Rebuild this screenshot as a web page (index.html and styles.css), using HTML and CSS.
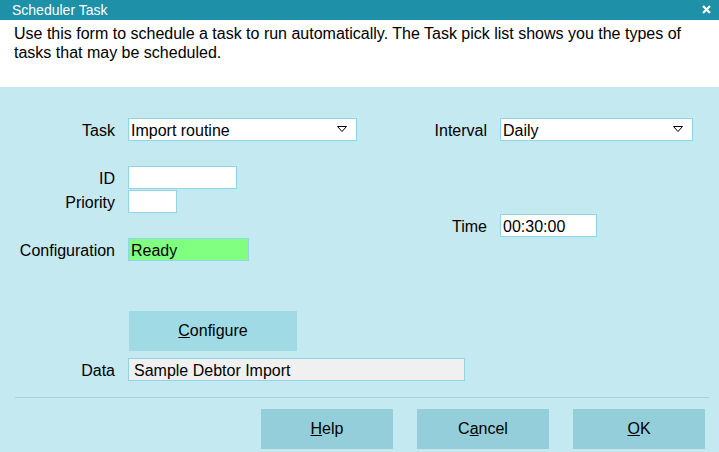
FILE: index.html
```html
<!DOCTYPE html>
<html>
<head>
<meta charset="utf-8">
<link rel="stylesheet" href="styles.css">
</head>
<body>
<div class="dialog">
  <div class="titlebar">
    <span class="title">Scheduler Task</span>
    <svg class="close" width="9" height="9" viewBox="0 0 9 9"><path d="M1 1 L8 8 M8 1 L1 8" stroke="#fff" stroke-width="2.2" fill="none"/></svg>
  </div>
  <div class="desc">Use this form to schedule a task to run automatically. The Task pick list shows you the types of tasks that may be scheduled.</div>
  <div class="body">
    <div class="grid">
      <div class="label r1">Task</div>
      <div class="field select task r1"><span>Import routine</span><svg width="10" height="6" viewBox="0 0 10 6"><path d="M0.5 0.5 H9.5 L5 5.5 Z" fill="none" stroke="#000" stroke-width="1"/></svg></div>
      <div class="label2 r1">Interval</div>
      <div class="field select interval r1"><span>Daily</span><svg width="10" height="6" viewBox="0 0 10 6"><path d="M0.5 0.5 H9.5 L5 5.5 Z" fill="none" stroke="#000" stroke-width="1"/></svg></div>

      <div class="label r3">ID</div>
      <div class="field id r3"></div>

      <div class="label r4">Priority</div>
      <div class="field prio r4"></div>

      <div class="label2 r5">Time</div>
      <div class="field time r5">00:30:00</div>

      <div class="label r6">Configuration</div>
      <div class="field config r6">Ready</div>
    </div>
    <div class="configure-row">
      <div class="btn configure"><u>C</u>onfigure</div>
    </div>
    <div class="data-row">
      <div class="label">Data</div>
      <div class="field data">Sample Debtor Import</div>
    </div>
    <div class="sep"></div>
    <div class="buttons">
      <div class="btn action"><u>H</u>elp</div>
      <div class="btn action">C<u>a</u>ncel</div>
      <div class="btn action"><u>O</u>K</div>
    </div>
  </div>
</div>
</body>
</html>
```

FILE: styles.css
```css
html, body {
  margin: 0;
  padding: 0;
}
body {
  font-family: "Liberation Sans", Arial, sans-serif;
  font-size: 16px;
  color: #000;
  background: #c5e9f1;
}
.dialog {
  width: 719px;
  height: 452px;
  overflow: hidden;
  background: #c5e9f1;
}
.titlebar {
  height: 20px;
  background: #1e90a8;
  color: #fff;
  display: flex;
  align-items: center;
  justify-content: space-between;
  padding: 0 8px 0 12px;
}
.title {
  font-size: 14px;
  line-height: 20px;
}
.close {
  display: block;
  margin-top: -1px;
}
.desc {
  height: 67px;
  box-sizing: border-box;
  background: #fff;
  padding: 4px 30px 0 14px;
  line-height: 19px;
}
.body {
  padding-top: 31px;
}
.grid {
  display: grid;
  grid-template-columns: 128px 229px 143px 193px;
  grid-template-rows: repeat(6, 23px);
  row-gap: 1px;
}
.r1 { grid-row: 1; }
.r3 { grid-row: 3; }
.r4 { grid-row: 4; }
.r5 { grid-row: 5; }
.r6 { grid-row: 6; }
.label {
  grid-column: 1;
  text-align: right;
  padding-right: 13px;
  line-height: 25px;
}
.label2 {
  grid-column: 3;
  text-align: right;
  padding-right: 13px;
  line-height: 25px;
}
.field {
  box-sizing: border-box;
  height: 23px;
  border: 1px solid #8ed6e6;
  background: #fff;
  line-height: 23px;
  padding-left: 2px;
  white-space: nowrap;
}
.r1.field, .r3.field, .r4.field, .r6.field { grid-column: 2; }
.interval, .time { grid-column: 4 !important; }
.select {
  display: flex;
  align-items: center;
  justify-content: space-between;
  padding-right: 9px;
}
.select span { line-height: 21px; padding-top: 1px; }
.select svg { display: block; margin-top: -1px; }
.task { width: 229px; }
.interval { width: 193px; }
.id { width: 109px; }
.prio { width: 49px; }
.time { width: 97px; }
.config {
  width: 121px;
  background: #80ff80;
}
.configure-row {
  margin-top: 50px;
  padding-left: 129px;
}
.btn {
  display: flex;
  align-items: center;
  justify-content: center;
  height: 40px;
}
.configure {
  width: 168px;
  background: #a0dae4;
}
.data-row {
  margin-top: 7px;
  display: flex;
}
.data-row .label {
  width: 128px;
  box-sizing: border-box;
}
.data {
  width: 337px;
  background: #f0f0f0;
  padding-left: 5px;
}
.sep {
  margin: 14px 10px 0 15px;
  height: 1px;
  background: #b4ccd3;
}
.buttons {
  margin-top: 11px;
  display: flex;
  justify-content: flex-end;
  gap: 24px;
  padding-right: 14px;
}
.action {
  width: 132px;
  background: #94ceda;
}
```
